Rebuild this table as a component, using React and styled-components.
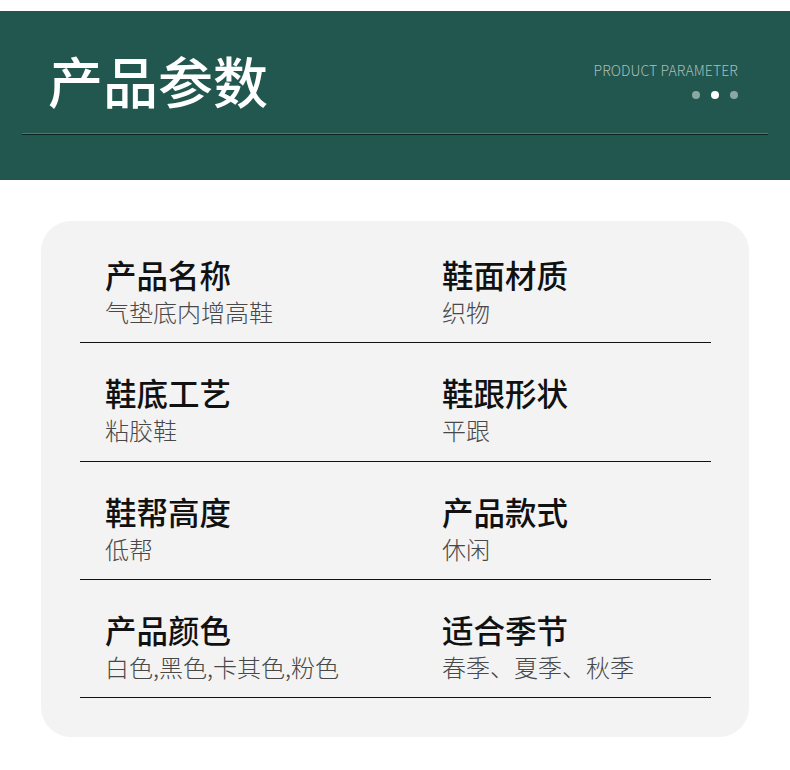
import React from "react";
import styled, { createGlobalStyle } from "styled-components";

const Global = createGlobalStyle`
  html, body { margin: 0; padding: 0; background: #ffffff; }
  body { font-family: "Noto Sans CJK SC", "Noto Sans", sans-serif; }
`;

const Page = styled.div`
  width: 790px;
  padding-top: 11px;
  padding-bottom: 33px;
  background: #fff;
`;

const Header = styled.header`
  height: 169px;
  background: #22574f;
  box-sizing: border-box;
  padding-top: 35px;
  display: flex;
  flex-direction: column;
`;

const HeaderTop = styled.div`
  display: flex;
  justify-content: space-between;
  align-items: flex-start;
  padding: 0 52px 0 48px;
  height: 87px;
`;

const Title = styled.h1`
  margin: 0;
  color: #ffffff;
  font-size: 55px;
  line-height: 66px;
  font-weight: 500;
`;

const Sub = styled.div`
  display: flex;
  flex-direction: column;
  align-items: flex-end;
  padding-top: 15px;
`;

const SubText = styled.div`
  color: #a9bfba;
  font-size: 14px;
  line-height: 18px;
  font-weight: 300;
  letter-spacing: 0.1px;
`;

const Dots = styled.div`
  display: flex;
  gap: 11px;
  margin-top: 12px;
`;

const Dot = styled.span`
  width: 8px;
  height: 8px;
  border-radius: 50%;
  background: ${(p) => (p.$active ? "#ffffff" : "#8aa7a1")};
`;

const Rule = styled.div`
  margin: 0 22px;
  height: 1px;
  border-top: 1px solid #3f7e73;
  background: #0b2420;
`;

const Card = styled.section`
  margin: 41px 41px 0;
  background: #f3f3f3;
  border-radius: 30px;
  padding: 4px 38px 39px 39px;
`;

const Row = styled.div`
  display: grid;
  grid-template-columns: 337px 1fr;
  height: 118.3px;
  box-sizing: border-box;
  padding: 29px 0 0 25px;
  border-bottom: 1px solid #111111;
`;

const Cell = styled.div`
  display: flex;
  flex-direction: column;
`;

const Label = styled.div`
  color: #111111;
  font-size: 31.5px;
  line-height: 40px;
  font-weight: 500;
`;

const Value = styled.div`
  color: #484848;
  font-size: 24px;
  line-height: 30px;
  margin-top: 3px;
  font-weight: 300;
`;

const rows = [
  [
    ["产品名称", "气垫底内增高鞋"],
    ["鞋面材质", "织物"],
  ],
  [
    ["鞋底工艺", "粘胶鞋"],
    ["鞋跟形状", "平跟"],
  ],
  [
    ["鞋帮高度", "低帮"],
    ["产品款式", "休闲"],
  ],
  [
    ["产品颜色", "白色,黑色,卡其色,粉色"],
    ["适合季节", "春季、夏季、秋季"],
  ],
];

export default function App() {
  return (
    <>
      <Global />
      <Page>
        <Header>
          <HeaderTop>
            <Title>产品参数</Title>
            <Sub>
              <SubText>PRODUCT PARAMETER</SubText>
              <Dots>
                <Dot />
                <Dot $active />
                <Dot />
              </Dots>
            </Sub>
          </HeaderTop>
          <Rule />
        </Header>
        <Card>
          {rows.map((r, i) => (
            <Row key={i}>
              {r.map(([k, v]) => (
                <Cell key={k}>
                  <Label>{k}</Label>
                  <Value>{v}</Value>
                </Cell>
              ))}
            </Row>
          ))}
        </Card>
      </Page>
    </>
  );
}
